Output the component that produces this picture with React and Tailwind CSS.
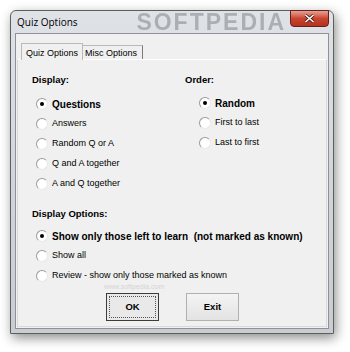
import { useState } from 'react';

const Radio = ({ checked, label, bold, onClick }) => (
    <div className="flex items-center h-[20px] cursor-default" onClick={onClick}>
        <span className="w-[12px] h-[12px] rounded-full bg-white border border-t-[#9a9a9a] border-l-[#9a9a9a] border-b-[#e8e8e8] border-r-[#e8e8e8] flex items-center justify-center shrink-0">
            {checked && <span className="w-[4px] h-[4px] rounded-full bg-black" />}
        </span>
        <span className={`ml-[4px] whitespace-pre ${bold ? 'font-bold text-[10px]' : 'text-[9px]'}`}>{label}</span>
    </div>
);

const App = () => {
    const [display, setDisplay] = useState(0);
    const [order, setOrder] = useState(0);
    const [filter, setFilter] = useState(0);

    const displayItems = ['Questions', 'Answers', 'Random Q or A', 'Q and A together', 'A and Q together'];
    const orderItems = ['Random', 'First to last', 'Last to first'];
    const filterItems = [
        'Show only those left to learn  (not marked as known)',
        'Show all',
        'Review - show only those marked as known',
    ];

    return (
        <div className="w-[350px] h-[352px] bg-white pt-[10px] pl-[10px] font-['Liberation_Sans',sans-serif] text-[9px] text-black">
            {/* window */}
            <div className="w-[324px] h-[324px] flex flex-col rounded-t-[6px] border border-[#5e5e5e] bg-gradient-to-b from-[#dfe3e8] via-[#d2d6db] to-[#c9cdd2] shadow-[2px_4px_12px_rgba(0,0,0,0.45)] px-[4px] pb-[4px]">
                <div className="h-[22px] flex items-start">
                    <span className="pl-[2px] pt-[6px] text-[10px] leading-[11px] font-['Open_Sans',sans-serif] text-black">Quiz Options</span>
                    <span className="ml-auto mr-[4px] text-[23px] leading-[22px] font-bold tracking-[2px] text-[#6f7378] opacity-45 blur-[0.6px] font-['Liberation_Sans',sans-serif] select-none">SOFTPEDIA</span>
                    <button className="w-[39px] h-[17px] -mt-[1px] rounded-b-[4px] border border-[#6b1e17] bg-gradient-to-b from-[#e4a196] via-[#c9442f] to-[#b3331f] flex items-center justify-center">
                        <svg width="11" height="9" viewBox="0 0 11 9">
                            <path d="M1.5 1 L9.5 8 M9.5 1 L1.5 8" stroke="#4a1a14" strokeWidth="3" />
                            <path d="M1.5 1 L9.5 8 M9.5 1 L1.5 8" stroke="#ffffff" strokeWidth="1.6" />
                        </svg>
                    </button>
                </div>
                {/* client */}
                <div className="flex-1 border border-[#8e9298] bg-[#f0f0f0] flex flex-col px-[1px] pb-[1px]">
                    <div className="flex items-end pl-[4px] mt-[8px] h-[17px]">
                        <div className="w-[62px] h-[17px] pl-[4px] pt-[3px] border border-b-0 border-[#b9b9b9] bg-[#f0f0f0] relative z-10 -mb-[1px]">Quiz Options</div>
                        <div className="w-[60px] h-[14px] pl-[2px] pt-[1px] border border-l-0 border-b-0 border-[#b9b9b9] border-r-[#7a7a7a] bg-[#f0f0f0]">Misc Options</div>
                    </div>
                    <div className="flex-1 border border-[#d9d9d9] border-t-white px-[14px] pt-[13px]">
                        <div className="grid grid-cols-[153px_1fr]">
                            <div>
                                <div className="font-bold text-[9.5px] h-[14px] leading-[14px]">Display:</div>
                                <div className="pl-[4px] mt-[7px]">
                                    {displayItems.map((item, i) => (
                                        <Radio key={item} label={item} checked={display === i} bold={display === i} onClick={() => setDisplay(i)} />
                                    ))}
                                </div>
                            </div>
                            <div>
                                <div className="font-bold text-[9.5px] h-[14px] leading-[14px]">Order:</div>
                                <div className="pl-[14px] mt-[6px]">
                                    {orderItems.map((item, i) => (
                                        <Radio key={item} label={item} checked={order === i} bold={order === i} onClick={() => setOrder(i)} />
                                    ))}
                                </div>
                            </div>
                        </div>
                        <div className="font-bold text-[9.5px] h-[14px] leading-[14px] mt-[13px]">Display Options:</div>
                        <div className="pl-[4px] mt-[5px] relative">
                            {filterItems.map((item, i) => (
                                <Radio key={item} label={item} checked={filter === i} bold={filter === i} onClick={() => setFilter(i)} />
                            ))}
                            <span className="absolute left-[72px] top-[57px] text-[7px] leading-[8px] text-[#d4d4d4] select-none">www.softpedia.com</span>
                        </div>
                        <div className="flex mt-[7px] pl-[74px] gap-[27px]">
                            <button className="w-[53px] h-[28px] border border-[#3c3c3c] bg-[#e9e9e9] p-[2px] text-[9.5px]">
                                <span className="block w-full h-full border border-dotted border-[#555] font-bold leading-[20px]">OK</span>
                            </button>
                            <button className="w-[53px] h-[28px] border border-[#b0b0b0] bg-gradient-to-b from-[#f4f4f4] to-[#e3e3e3] font-bold text-[9.5px]">Exit</button>
                        </div>
                    </div>
                </div>
            </div>
        </div>
    );
};

export default App;
